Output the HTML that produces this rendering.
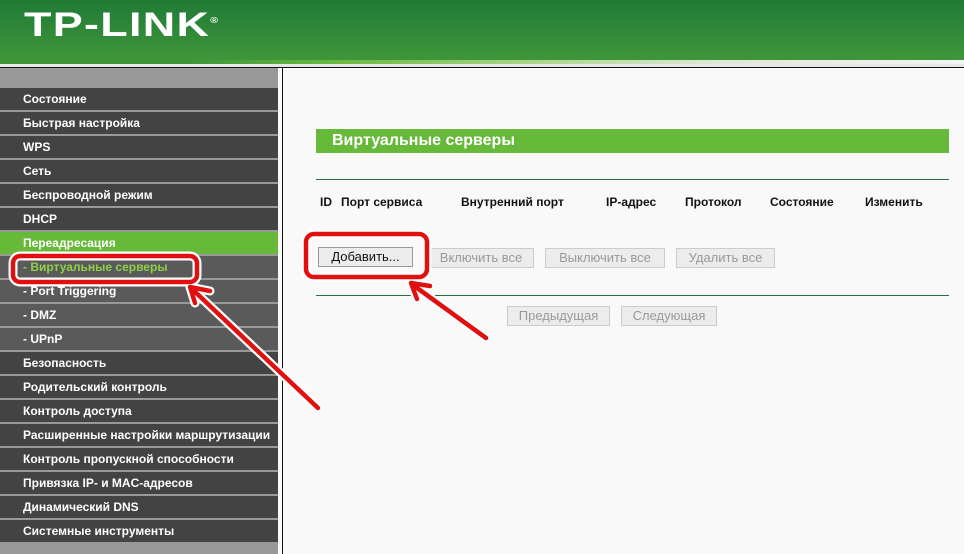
<!DOCTYPE html>
<html><head><meta charset="utf-8"><style>
*{margin:0;padding:0;box-sizing:border-box}
body{width:964px;height:554px;overflow:hidden;background:#f9f9f9;font-family:"Liberation Sans",Arial,sans-serif;position:relative}
#hdr{position:absolute;left:0;top:0;width:964px;height:60px;background:linear-gradient(#1f7a36,#3f9639)}
#logo{position:absolute;left:24px;top:6px;color:#fff;font-weight:bold;font-size:34px;letter-spacing:1px;transform:scaleX(1.32);transform-origin:left}
#logo sup{font-size:8px;vertical-align:top;position:relative;top:10px}
#strip{position:absolute;left:0;top:60px;width:964px;height:4px;background:linear-gradient(90deg,#3f9639 20%,#6ab940 35%,#a9d58a 55%,#dfe8d8 75%,#f4f4f4)}
#strip2{position:absolute;left:0;top:64px;width:964px;height:3px;background:#e8e8e8}
#blk{position:absolute;left:0;top:67px;width:964px;height:1px;background:#111}
#side{position:absolute;left:0;top:68px;width:278px;height:486px;background:#999}
.it{position:absolute;left:0;width:278px;height:22px;background:#434343;color:#fff;font-weight:bold;font-size:12px;line-height:22px;padding-left:23px}
.sub{background:#5a5a5a}
.act{background:#67b93a}
#vl1{position:absolute;left:278px;top:68px;width:4px;height:486px;background:#fafafa}
#vl2{position:absolute;left:282px;top:68px;width:1px;height:486px;background:#111}
#title{position:absolute;left:316px;top:129px;width:633px;height:24px;background:#67b93a;color:#fff;font-weight:bold;font-size:16px;line-height:24px;padding-left:16px}
.hl{position:absolute;left:316px;width:633px;height:1px;background:#2a6e3a}
.th{position:absolute;top:195px;font-size:12px;font-weight:bold;color:#111}
.btn{position:absolute;height:20px;background:#ececec;border:1px solid #ccc;color:#999;font-size:13px;line-height:18px;text-align:center}
</style></head><body>
<div id="hdr"><div id="logo">TP-LINK<sup>®</sup></div></div>
<div id="strip"></div><div id="strip2"></div><div id="blk"></div>
<div id="side">
<div class="it" style="top:20px">Состояние</div>
<div class="it" style="top:44px">Быстрая настройка</div>
<div class="it" style="top:68px">WPS</div>
<div class="it" style="top:92px">Сеть</div>
<div class="it" style="top:116px">Беспроводной режим</div>
<div class="it" style="top:140px">DHCP</div>
<div class="it act" style="top:164px">Переадресация</div>
<div class="it sub" style="top:188px;color:#8fd04a;padding-left:23px">- Виртуальные серверы</div>
<div class="it sub" style="top:212px">- Port Triggering</div>
<div class="it sub" style="top:236px">- DMZ</div>
<div class="it sub" style="top:260px">- UPnP</div>
<div class="it" style="top:284px">Безопасность</div>
<div class="it" style="top:308px">Родительский контроль</div>
<div class="it" style="top:332px">Контроль доступа</div>
<div class="it" style="top:356px">Расширенные настройки маршрутизации</div>
<div class="it" style="top:380px">Контроль пропускной способности</div>
<div class="it" style="top:404px">Привязка IP- и MAC-адресов</div>
<div class="it" style="top:428px">Динамический DNS</div>
<div class="it" style="top:452px">Системные инструменты</div>
</div>
<div id="vl1"></div><div id="vl2"></div>
<div id="title">Виртуальные серверы</div>
<div class="hl" style="top:179px"></div>
<div class="th" style="left:320px">ID</div>
<div class="th" style="left:341px">Порт сервиса</div>
<div class="th" style="left:461px">Внутренний порт</div>
<div class="th" style="left:606px">IP-адрес</div>
<div class="th" style="left:685px">Протокол</div>
<div class="th" style="left:770px">Состояние</div>
<div class="th" style="left:865px">Изменить</div>
<div class="btn" style="left:318px;top:247px;width:95px;color:#111;border-color:#999">Добавить...</div>
<div class="btn" style="left:428px;top:248px;width:106px">Включить все</div>
<div class="btn" style="left:545px;top:248px;width:120px">Выключить все</div>
<div class="btn" style="left:676px;top:248px;width:99px">Удалить все</div>
<div class="hl" style="top:295px"></div>
<div class="btn" style="left:507px;top:306px;width:103px">Предыдущая</div>
<div class="btn" style="left:621px;top:306px;width:96px">Следующая</div>
<svg width="964" height="554" style="position:absolute;left:0;top:0">
<g fill="none" stroke="#fff" stroke-width="9" stroke-linejoin="round" stroke-linecap="round">
<rect x="13" y="256" width="184" height="26" rx="7"/>
<rect x="306" y="234" width="121" height="43" rx="8"/>
<path d="M318 408 L192 289 M190 287 L210 291 M190 287 L195 303"/>
<path d="M486 338 L413 285 M411 283 L430 286 M411 283 L417 299"/>
</g>
<g fill="none" stroke="#e01010" stroke-width="4.5" stroke-linejoin="round" stroke-linecap="round">
<rect x="13" y="256" width="184" height="26" rx="7"/>
<rect x="306" y="234" width="121" height="43" rx="8"/>
<path d="M318 408 L192 289 M190 287 L210 291 M190 287 L195 303"/>
<path d="M486 338 L413 285 M411 283 L430 286 M411 283 L417 299"/>
</g>
</svg>
</body></html>
